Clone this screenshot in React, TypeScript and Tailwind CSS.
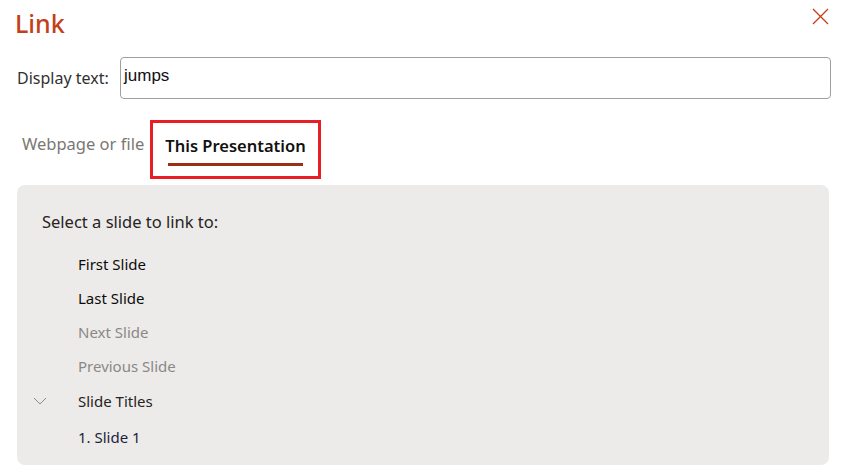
import React from "react";

export default function App() {
  const font = { fontFamily: '"Noto Sans", "Open Sans", sans-serif' };
  return (
    <div className="w-[850px] h-[472px] bg-white relative overflow-hidden" style={font}>
      <div className="flex items-start justify-between pl-[15px] pr-[21px] pt-[6px] h-[48px]">
        <h1 className="text-[25px] leading-[34px] font-medium text-[#c43e1c]">Link</h1>
        <svg width="17" height="17" viewBox="0 0 17 17" className="mt-[2px]">
          <path d="M1 1 L16 16 M16 1 L1 16" stroke="#c43e1c" strokeWidth="1.3" fill="none" />
        </svg>
      </div>
      <div className="flex items-center pl-[17px] pr-[19px] mt-[9px]">
        <span className="text-[16px] text-[#323130] w-[103px]">Display text:</span>
        <div className="flex-1 h-[42px] border border-[#a19f9d] rounded-[4px] flex items-center pl-[3px] pb-[4px]">
          <span className="text-[17px] text-[#111]" style={{ fontFamily: '"Liberation Sans", Arial, sans-serif' }}>jumps</span>
        </div>
      </div>
      <div className="flex items-start pl-[22px] mt-[21px] h-[59px]">
        <span className="text-[16.5px] leading-[24px] text-[#7a7774] w-[128px] mt-[12px]">Webpage or file</span>
        <div className="border-[3px] border-[#e81e24] h-[59px] w-[171px] flex flex-col items-center pt-[11px]">
          <span className="text-[16.5px] font-semibold text-[#111] leading-[24px]">This Presentation</span>
          <div className="w-[135px] h-[3px] bg-[#9b2e14] mt-[5px]" />
        </div>
      </div>
      <div className="ml-[17px] mt-[6px] mr-[21px] h-[280px] bg-[#edebe9] rounded-[8px] pt-[25px]">
        <div className="pl-[25px] text-[16.5px] text-[#252423] leading-[24px]">Select a slide to link to:</div>
        <div className="mt-[13px] flex flex-col text-[15px] leading-[22px]">
          <div className="pl-[61px] h-[34px] flex items-center text-[#0b0b0b]">First Slide</div>
          <div className="pl-[61px] h-[34px] flex items-center text-[#0b0b0b]">Last Slide</div>
          <div className="pl-[61px] h-[34px] flex items-center text-[#8a8886]">Next Slide</div>
          <div className="pl-[61px] h-[34px] flex items-center text-[#8a8886]">Previous Slide</div>
          <div className="pl-[16px] h-[36px] flex items-center text-[#252423]">
            <svg width="14" height="8" viewBox="0 0 14 8" className="mr-[31px]">
              <path d="M1 1 L7 7 L13 1" stroke="#8a8886" strokeWidth="1" fill="none" />
            </svg>
            Slide Titles
          </div>
          <div className="pl-[61px] h-[36px] flex items-center text-[#1b1f3b]">1. Slide 1</div>
        </div>
      </div>
    </div>
  );
}
